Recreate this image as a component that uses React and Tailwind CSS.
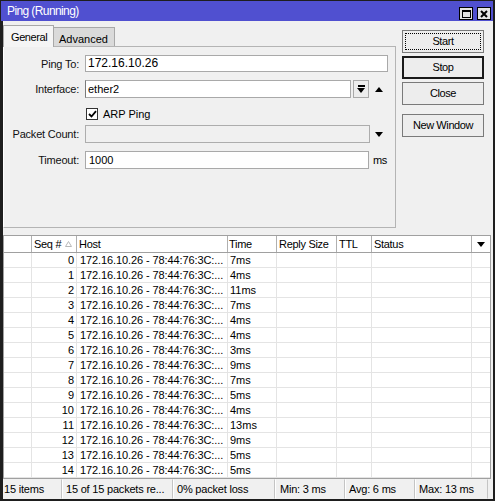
import React from 'react';

const rows = [
  [0, '7ms'], [1, '4ms'], [2, '11ms'], [3, '7ms'], [4, '4ms'],
  [5, '4ms'], [6, '3ms'], [7, '9ms'], [8, '7ms'], [9, '5ms'],
  [10, '4ms'], [11, '13ms'], [12, '9ms'], [13, '5ms'], [14, '5ms'],
];

const cols = 'grid grid-cols-[28px_45px_151px_49px_60px_35px_100px_18px]';

function DownTri({ className = '' }) {
  return (
    <svg width="8" height="5" viewBox="0 0 8 5" className={className}>
      <path d="M0 0 H8 L4 5 Z" fill="#000" />
    </svg>
  );
}

function UpTri() {
  return (
    <svg width="8" height="5" viewBox="0 0 8 5">
      <path d="M0 5 H8 L4 0 Z" fill="#000" />
    </svg>
  );
}

function Label({ children }) {
  return (
    <div className="w-[75px] text-right text-[11px] tracking-[-0.2px] leading-[18px] text-[#111]">
      {children}
    </div>
  );
}

function WinButton({ children, variant }) {
  let cls = 'border border-[#7a7a7a]';
  if (variant === 'stop') cls = 'border-2 border-[#1a1a1a]';
  return (
    <button className={`h-[23px] w-[82px] bg-[#ededed] ${cls} relative text-[11px] tracking-[-0.4px] text-black flex items-center justify-center`}>
      {variant === 'focus' && (
        <span className="absolute inset-[2px] border border-dotted border-black" />
      )}
      <span className="relative">{children}</span>
    </button>
  );
}

export default function App() {
  return (
    <div className="w-[495px] h-[501px] flex flex-col bg-[#f0f0f0] border-t border-l-[3px] border-r-2 border-b-2 border-[#1e1e1e] font-['Liberation_Sans',Arial,sans-serif] text-black select-none">
      {/* title bar */}
      <div className="h-[20px] bg-[#5050d0] flex items-start justify-between pl-[4px] pr-[2px] -ml-[2px]">
        <span className="text-white text-[12px] tracking-[-0.6px] leading-[20px] pl-[2px]">Ping (Running)</span>
        <div className="flex gap-[4px] mt-[6px]">
          <div className="w-[14px] h-[13px] bg-[#e4e4e4] border border-black flex items-center justify-center">
            <div className="w-[9px] h-[8px] border border-black border-t-2" />
          </div>
          <div className="w-[14px] h-[13px] bg-[#e4e4e4] border border-black flex items-center justify-center">
            <svg width="8" height="8" viewBox="0 0 8 8">
              <path d="M1 1 L7 7 M7 1 L1 7" stroke="#000" strokeWidth="2" />
            </svg>
          </div>
        </div>
      </div>

      {/* top section */}
      <div className="h-[214px] flex">
        <div className="w-[393px] flex flex-col pt-[4px]">
          {/* tabs */}
          <div className="flex items-end h-[21px]">
            <div className="relative z-10 h-[22px] w-[51px] -mb-px bg-[#f5f5f5] border-t border-l border-r border-[#a8a8a8] text-[11px] tracking-[-0.4px] pl-[7px] pt-[3px]">
              General
            </div>
            <div className="h-[19px] w-[61px] bg-[#dadada] border-t border-r border-[#a8a8a8] text-[11px] pl-[5px] pt-[3px]">
              Advanced
            </div>
          </div>
          {/* panel */}
          <div className="h-[182px] border border-[#b4b4b4] border-l-white flex flex-col">
            <div className="flex mt-[8px] h-[17px]">
              <Label>Ping To:</Label>
              <div className="ml-[6px] w-[303px] h-[17px] bg-white border border-[#a9a9a9] text-[12px] leading-[15px] pl-[2px]">172.16.10.26</div>
            </div>
            <div className="flex mt-[8px] h-[18px] items-center">
              <Label>Interface:</Label>
              <div className="ml-[6px] w-[266px] h-[18px] bg-white border border-[#a9a9a9] border-l-[#7a7a7a] text-[11px] leading-[16px] pl-[2px]">ether2</div>
              <div className="ml-[2px] w-[16px] h-[18px] bg-[#ededed] border border-[#a9a9a9] flex flex-col items-center justify-center gap-[1px]">
                <div className="w-[7px] h-[2px] bg-black" />
                <DownTri />
              </div>
              <div className="ml-[6px] flex items-center"><UpTri /></div>
            </div>
            <div className="flex mt-[10px] h-[12px] items-center">
              <div className="w-[82px]" />
              <div className="w-[12px] h-[12px] bg-white border border-[#333] flex items-center justify-center">
                <svg width="9" height="8" viewBox="0 0 9 8">
                  <path d="M1 4 L3.5 6.5 L8 1.2" stroke="#000" strokeWidth="1.8" fill="none" />
                </svg>
              </div>
              <span className="ml-[5px] text-[11px] leading-[12px]">ARP Ping</span>
            </div>
            <div className="flex mt-[5px] h-[18px] items-center">
              <Label>Packet Count:</Label>
              <div className="ml-[6px] w-[285px] h-[18px] bg-[#f0f0f0] border border-[#adadad]" />
              <div className="ml-[5px] flex items-center"><DownTri /></div>
            </div>
            <div className="flex mt-[8px] h-[18px] items-center">
              <Label>Timeout:</Label>
              <div className="ml-[6px] w-[284px] h-[18px] bg-white border border-[#a9a9a9] text-[11px] leading-[16px] pl-[3px]">1000</div>
              <span className="ml-[4px] text-[11px] tracking-[-0.3px]">ms</span>
            </div>
          </div>
        </div>
        <div className="ml-[6px] flex flex-col pt-[9px]">
          <WinButton variant="focus">Start</WinButton>
          <div className="mt-[3px]"><WinButton variant="stop">Stop</WinButton></div>
          <div className="mt-[3px]"><WinButton>Close</WinButton></div>
          <div className="mt-[9px]"><WinButton>New Window</WinButton></div>
        </div>
      </div>

      {/* table */}
      <div className="w-[488px] h-[244px] border border-[#a0a0a0] bg-white flex flex-col">
        <div className={`${cols} h-[17px] border-b border-[#a0a0a0] text-[11px] tracking-[-0.3px] leading-[16px]`}>
          <div className="border-r border-[#b0b0b0]" />
          <div className="border-r border-[#b0b0b0] pl-[2px] flex items-center">
            <span>Seq #</span>
            <svg width="7" height="6" viewBox="0 0 7 6" className="ml-[4px]">
              <path d="M0.5 5.5 H6.5 L3.5 0.5 Z" fill="none" stroke="#b8b8b8" strokeWidth="1" />
            </svg>
          </div>
          <div className="border-r border-[#b0b0b0] pl-[2px]">Host</div>
          <div className="border-r border-[#b0b0b0] pl-[1px]">Time</div>
          <div className="border-r border-[#b0b0b0] pl-[2px]">Reply Size</div>
          <div className="border-r border-[#b0b0b0] pl-[2px]">TTL</div>
          <div className="border-r border-[#b0b0b0] pl-[2px]">Status</div>
          <div className="flex items-center justify-center"><DownTri /></div>
        </div>
        {rows.map(([seq, time]) => (
          <div key={seq} className={`${cols} h-[15px] border-b border-[#e4e4e4] text-[11px] leading-[14px]`}>
            <div className="border-r border-[#e4e4e4]" />
            <div className="border-r border-[#e4e4e4] text-right pr-[2px]">{seq}</div>
            <div className="border-r border-[#e4e4e4] pl-[3px] tracking-[-0.1px] whitespace-nowrap">172.16.10.26 - 78:44:76:3C:...</div>
            <div className="border-r border-[#e4e4e4] pl-[2px]">{time}</div>
            <div className="border-r border-[#e4e4e4]" />
            <div className="border-r border-[#e4e4e4]" />
            <div className="border-r border-[#e4e4e4]" />
            <div />
          </div>
        ))}
      </div>

      {/* status bar */}
      <div className="flex h-[20px] text-[11px] tracking-[-0.2px] leading-[18px]">
        <div className="w-[59px] border border-[#f0f0f0] border-r-[#c4c4c4] pl-[0px]">15 items</div>
        <div className="w-[111px] border border-[#f0f0f0] border-l-white border-r-[#c4c4c4] pl-[3px] whitespace-nowrap">15 of 15 packets re...</div>
        <div className="w-[102px] border border-[#f0f0f0] border-l-white border-r-[#c4c4c4] pl-[3px] whitespace-nowrap">0% packet loss</div>
        <div className="w-[70px] border border-[#f0f0f0] border-l-white border-r-[#c4c4c4] pl-[4px]">Min: 3 ms</div>
        <div className="w-[70px] border border-[#f0f0f0] border-l-white border-r-[#c4c4c4] pl-[3px]">Avg: 6 ms</div>
        <div className="w-[73px] border border-[#f0f0f0] border-l-white border-r-[#c4c4c4] pl-[3px]">Max: 13 ms</div>
      </div>
    </div>
  );
}
